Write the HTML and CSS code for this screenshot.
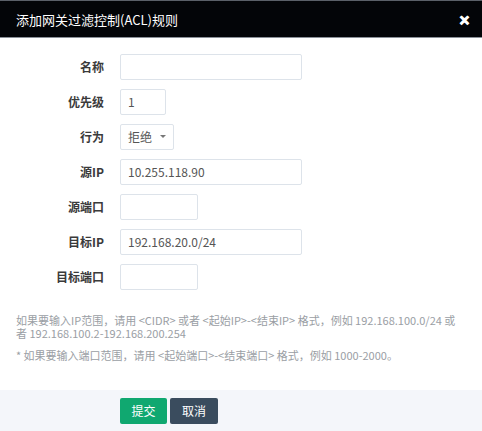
FILE: index.html
```html
<!DOCTYPE html>
<html lang="zh">
<head>
<meta charset="utf-8">
<link rel="stylesheet" href="styles.css">
</head>
<body>
<div class="modal">
  <div class="header">
    <span class="title">添加网关过滤控制(ACL)规则</span>
    <span class="close">&#x2715;</span>
  </div>
  <div class="body">
    <div class="row"><label>名称</label><div class="input w-l"></div></div>
    <div class="row"><label>优先级</label><div class="input w-s">1</div></div>
    <div class="row"><label>行为</label><div class="input select">拒绝<span class="caret"></span></div></div>
    <div class="row"><label>源IP</label><div class="input w-l">10.255.118.90</div></div>
    <div class="row"><label>源端口</label><div class="input w-m"></div></div>
    <div class="row"><label>目标IP</label><div class="input w-l">192.168.20.0/24</div></div>
    <div class="row"><label>目标端口</label><div class="input w-m"></div></div>
    <p class="help">如果要输入IP范围，请用 &lt;CIDR&gt; 或者 &lt;起始IP&gt;-&lt;结束IP&gt; 格式，例如 192.168.100.0/24 或者 192.168.100.2-192.168.200.254</p>
    <p class="help">* 如果要输入端口范围，请用 &lt;起始端口&gt;-&lt;结束端口&gt; 格式，例如 1000-2000。</p>
  </div>
  <div class="footer">
    <button class="btn ok">提交</button>
    <button class="btn cancel">取消</button>
  </div>
</div>
</body>
</html>
```

FILE: styles.css
```css
html, body {
  margin: 0;
  padding: 0;
  background: #fff;
  font-family: "Noto Sans CJK SC", "Noto Sans", sans-serif;
}
.modal {
  width: 482px;
  height: 431px;
  display: flex;
  flex-direction: column;
  border-top: 1px solid #5a6068;
  box-sizing: border-box;
}
.header {
  height: 36px;
  background: #030508;
  border-bottom: 1px solid #8a9098;
  display: flex;
  align-items: center;
  justify-content: space-between;
  padding: 0 12px 0 16px;
  color: #fff;
}
.title {
  font-size: 13px;
  font-weight: 400;
}
.close {
  font-size: 13px;
  font-weight: 900;
  -webkit-text-stroke: 1px #fff;
}
.body {
  flex: 1;
  padding-top: 16px;
}
.row {
  display: flex;
  align-items: center;
  height: 25px;
  margin-bottom: 10px;
}
.row label {
  width: 104px;
  text-align: right;
  padding-right: 16px;
  font-size: 12px;
  font-weight: 700;
  color: #3a3a3a;
}
.input {
  box-sizing: border-box;
  height: 26px;
  border: 1px solid #dde3ea;
  border-radius: 2px;
  padding: 0 7px;
  display: flex;
  align-items: center;
  font-size: 12px;
  color: #555;
}
.w-l { width: 182px; }
.w-m { width: 78px; }
.w-s { width: 46px; }
.select { width: 54px; justify-content: space-between; }
.caret {
  width: 0;
  height: 0;
  border-left: 3px solid transparent;
  border-right: 3px solid transparent;
  border-top: 3px solid #777;
  margin-left: 6px;
}
.help {
  margin: 0 16px;
  font-size: 11px;
  line-height: 13px;
  color: #9a9ea4;
}
.help:first-of-type {
  margin-top: 25px;
  margin-bottom: 9px;
}
.footer {
  height: 41px;
  background: #f4f6fa;
  display: flex;
  align-items: center;
  padding-left: 120px;
  gap: 3px;
}
.btn {
  height: 26px;
  width: 48px;
  border: none;
  border-radius: 2px;
  color: #fff;
  font-family: inherit;
  font-size: 12px;
  padding: 0;
}
.ok { background: #10a870; width: 47px; }
.cancel { background: #3a4c5e; }
```
